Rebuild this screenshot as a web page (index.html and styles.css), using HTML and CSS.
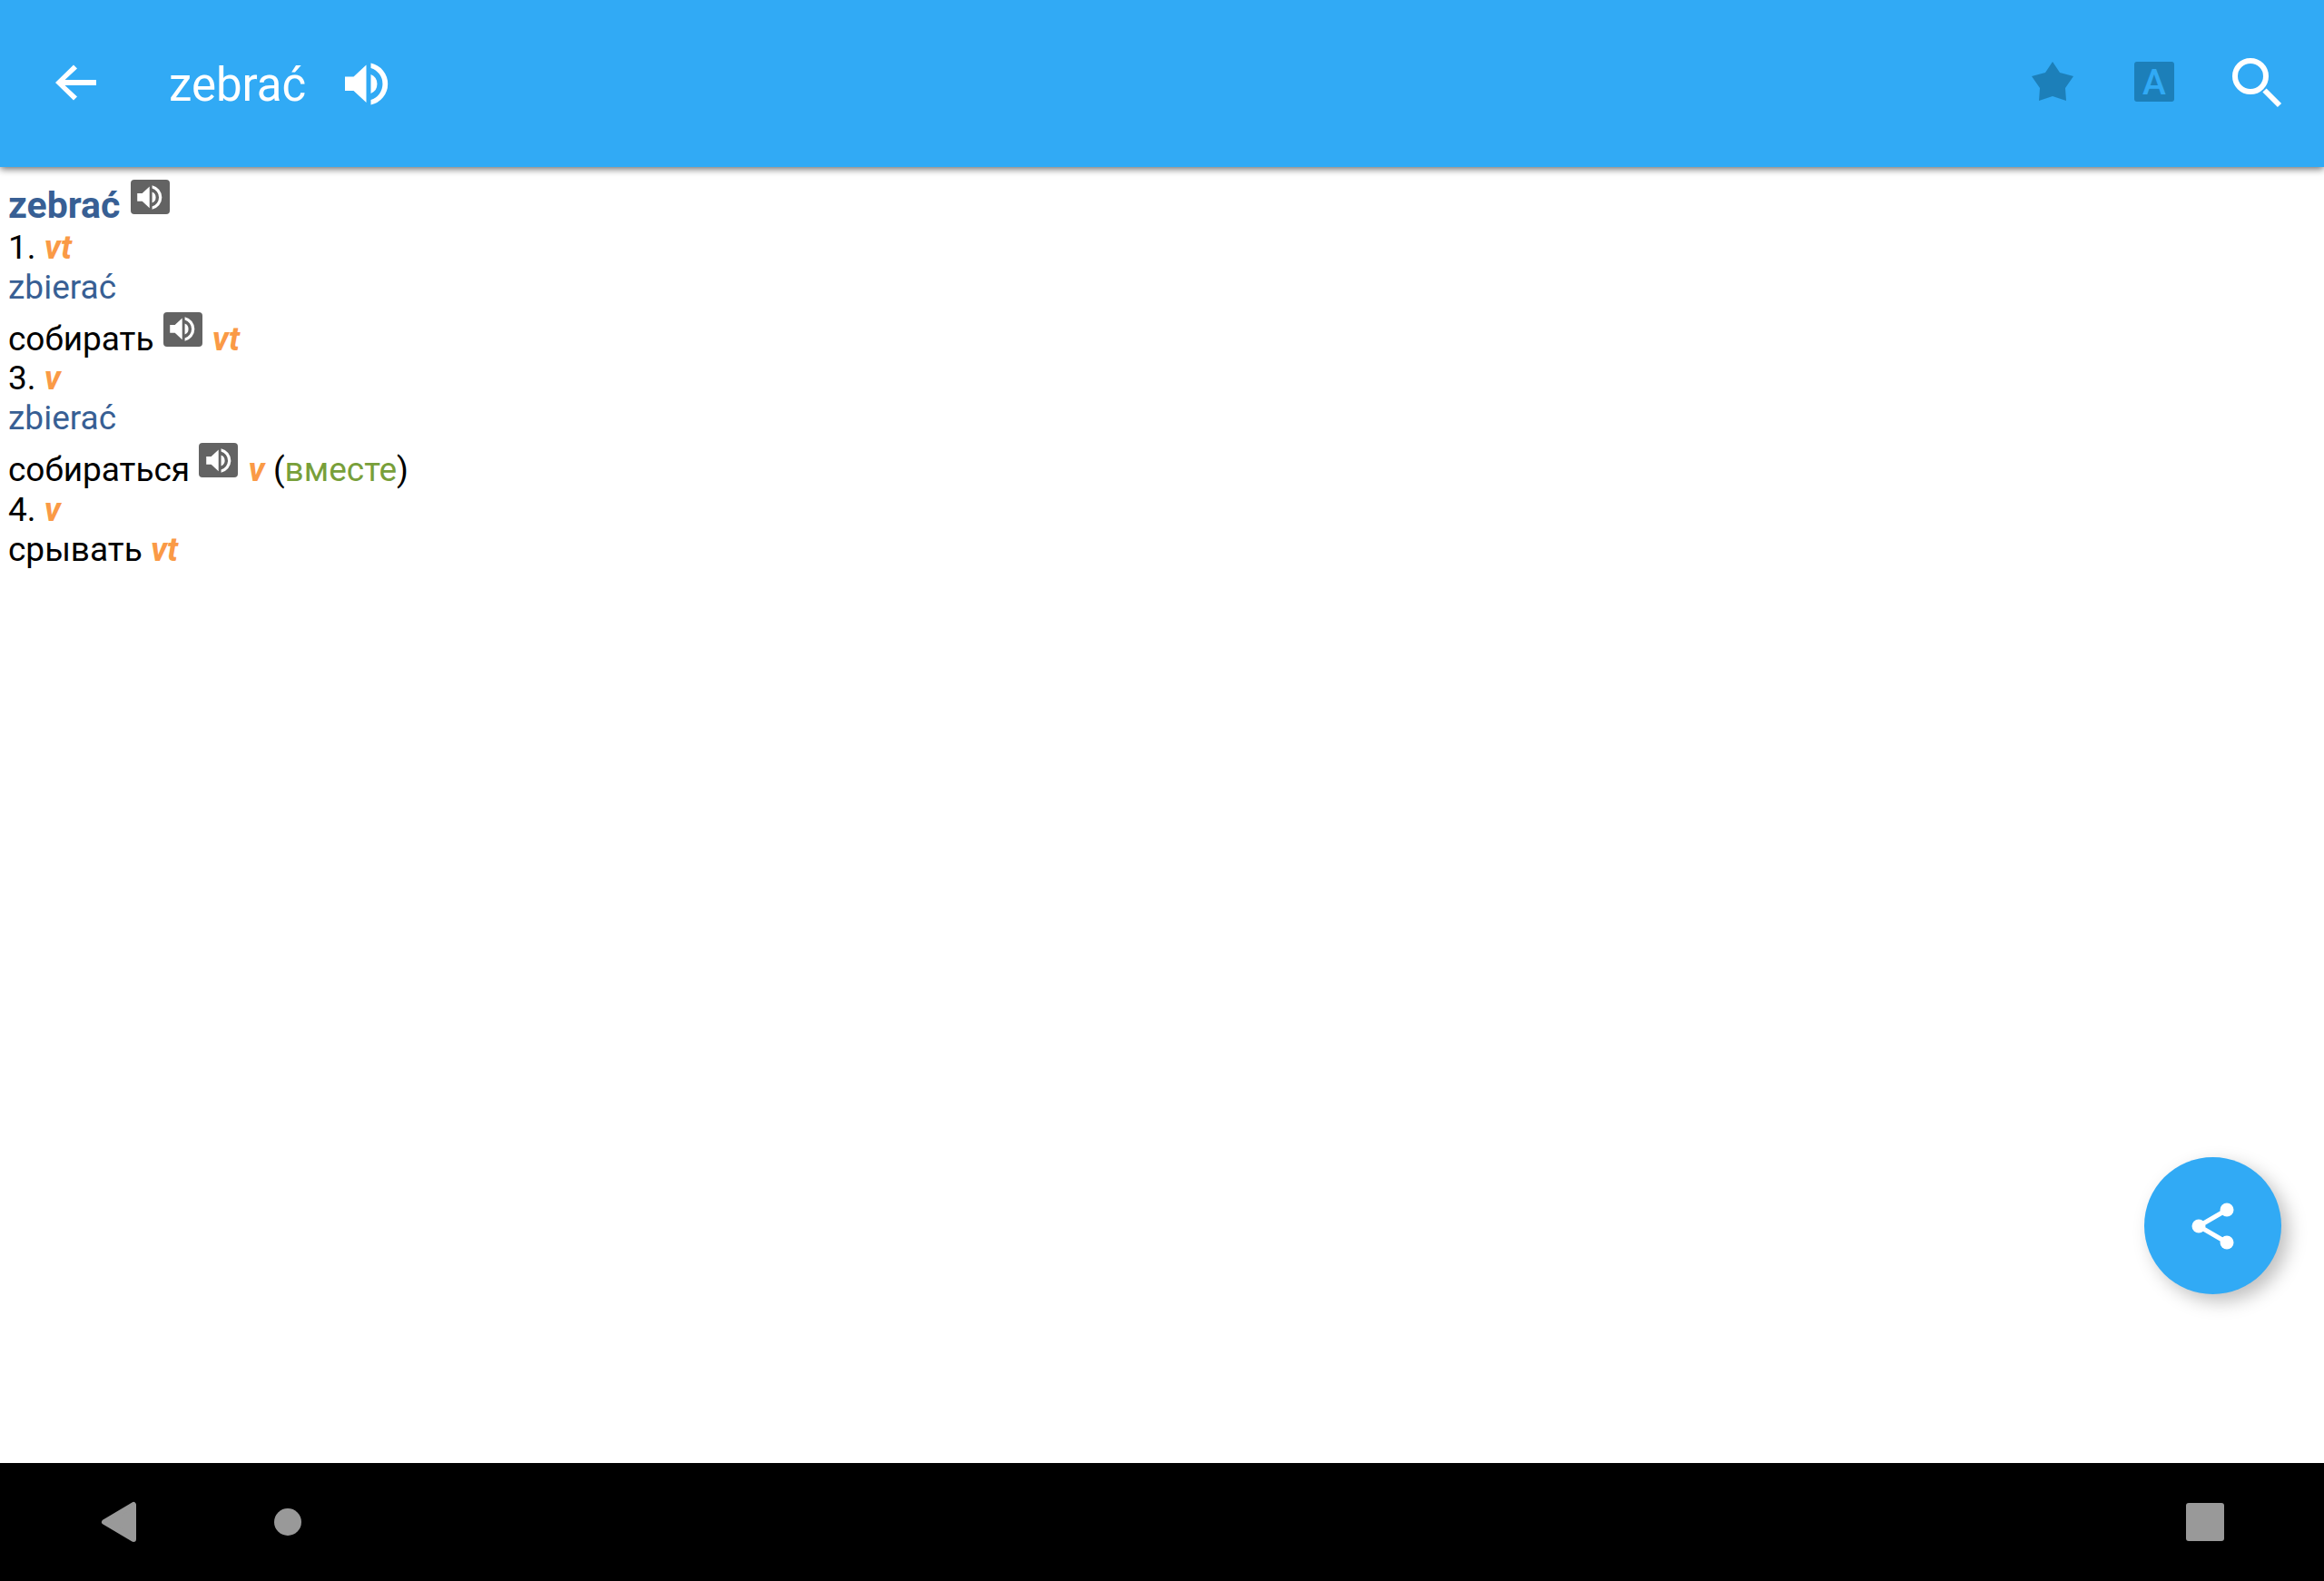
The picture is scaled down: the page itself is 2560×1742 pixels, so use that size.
FILE: index.html
```html
<!DOCTYPE html>
<html lang="pl">

<head>
    <meta charset="UTF-8">
    <meta name="viewport" content="width=device-width, initial-scale=1.0">
    <title>zebrać</title>
    <link rel="stylesheet" href="styles.css">
</head>

<body>
    <!-- speaker shape shared by all sound buttons -->
    <svg class="defs" aria-hidden="true">
        <symbol id="speaker" viewBox="8 8 48 47">
            <path d="M8 23.5H17.5L31.5 10.5V52L17.5 39H8Z" />
            <path d="M36.5 21A11.4 11.4 0 0 1 36.5 42Z" />
            <path d="M36.5 8.5A23.5 23.5 0 0 1 36.5 54.5V49A18.3 18.3 0 0 0 36.5 14Z" />
        </symbol>
    </svg>

    <header class="toolbar">
        <button type="button" class="back" aria-label="Back">
            <svg class="icon" viewBox="0 0 64 64">
                <path d="M9 31L29 11.5L33 15.5L19.5 28H54V34H19.5L33 46.5L29 50.5Z" />
            </svg>
        </button>
        <h1 class="title">zebrać</h1>
        <button type="button" class="speak" aria-label="Listen">
            <svg class="speak-icon"><use href="#speaker" /></svg>
        </button>
        <div class="actions">
            <button type="button" class="action muted" aria-label="Favorite">
                <svg class="icon" viewBox="0 0 64 64">
                    <path d="M32 8L40 20L55 24L46 37L47 51L32 46L17 51L18 37L9 24L24 20Z" />
                </svg>
            </button>
            <button type="button" class="action muted" aria-label="Font">
                <svg class="icon" viewBox="0 0 64 64">
                    <rect x="10" y="8" width="44" height="44" rx="3" />
                    <text class="letter" x="32" y="44" text-anchor="middle">A</text>
                </svg>
            </button>
            <button type="button" class="action" aria-label="Search">
                <svg class="icon line" viewBox="0 0 64 64">
                    <circle cx="26" cy="24" r="17" />
                    <path d="M41.5 39.5L58 56" />
                </svg>
            </button>
        </div>
    </header>

    <main class="article">
        <h2 class="word">zebrać <button type="button" class="sound" aria-label="Listen"><svg class="sound-icon"><use href="#speaker" /></svg></button></h2>
        <div>1. <em>vt</em></div>
        <div><a href="#">zbierać</a></div>
        <div lang="ru">собирать <button type="button" class="sound" aria-label="Listen"><svg class="sound-icon"><use href="#speaker" /></svg></button> <em>vt</em></div>
        <div>3. <em>v</em></div>
        <div><a href="#">zbierać</a></div>
        <div lang="ru">собираться <button type="button" class="sound" aria-label="Listen"><svg class="sound-icon"><use href="#speaker" /></svg></button> <em>v</em> (<span class="note">вместе</span>)</div>
        <div>4. <em>v</em></div>
        <div lang="ru">срывать <em>vt</em></div>

        <button type="button" class="share" aria-label="Share">
            <svg class="share-icon" viewBox="0 0 64 64">
                <path d="M47 14L16 32L47 50" />
                <circle cx="47" cy="14" r="7.5" />
                <circle cx="16" cy="32" r="7.5" />
                <circle cx="47" cy="50" r="7.5" />
            </svg>
        </button>
    </main>

    <nav class="navbar">
        <button type="button" class="nav-button" aria-label="Back">
            <svg class="icon" viewBox="0 0 64 64">
                <path d="M16 32L48 13V51Z" stroke="#999" stroke-width="6" stroke-linejoin="round" />
            </svg>
        </button>
        <button type="button" class="nav-button" aria-label="Home">
            <svg class="icon" viewBox="0 0 64 64">
                <circle cx="32" cy="32" r="15" />
            </svg>
        </button>
        <button type="button" class="nav-button recent" aria-label="Recent apps">
            <svg class="icon" viewBox="0 0 64 64">
                <rect x="11" y="11" width="42" height="42" rx="3" />
            </svg>
        </button>
    </nav>
</body>

</html>
```
FILE: styles.css
```css
* {
    box-sizing: border-box;
}

body {
    display: flex;
    flex-direction: column;
    min-height: 100vh;
    margin: 0;
    font-family: Roboto, "Noto Sans", sans-serif;
    background-color: #fff;
    color: #000;
}

button {
    display: flex;
    align-items: center;
    justify-content: center;
    padding: 0;
    border: none;
    background: none;
    color: #fff;
    cursor: pointer;
}

svg {
    display: block;
    fill: currentColor;
}

.defs {
    position: absolute;
    width: 0;
    height: 0;
}

.icon {
    width: 64px;
    height: 64px;
}

/* top bar */
.toolbar {
    display: flex;
    align-items: center;
    height: 184px;
    padding-right: 19px;
    background-color: #31aaf5;
    color: #fff;
    box-shadow: 0 2px 8px rgba(0, 0, 0, 0.6);
}

.back {
    width: 168px;
    height: 112px;
}

.title {
    margin: 0;
    padding: 3px 0 0 18px;
    font-size: 51px;
    font-weight: 400;
}

.speak {
    margin-left: 43px;
}

.speak-icon {
    width: 48px;
    height: 47px;
}

.actions {
    display: flex;
    margin-left: auto;
}

.action {
    width: 112px;
    height: 112px;
}

.muted {
    color: #1c7fb9;
}

.letter {
    font-family: Roboto, sans-serif;
    font-size: 39px;
    font-weight: 500;
    fill: #31aaf5;
}

.line {
    fill: none;
    stroke: currentColor;
    stroke-width: 6;
}

/* dictionary entry */
.article {
    position: relative;
    flex: 1;
    padding: 9px;
    font-size: 37px;
    line-height: 44px;
}

.word {
    margin: 0;
    font-size: 41px;
    line-height: 50px;
    color: #385f94;
}

.article a {
    color: #385f94;
    text-decoration: none;
}

.article em {
    font-weight: 700;
    color: #fa9a46;
}

.note {
    color: #789f3a;
}

.sound {
    display: inline-flex;
    width: 43px;
    height: 38px;
    margin: 5px 2px 0 1px;
    border-radius: 4px;
    background-color: #636363;
    vertical-align: 9px;
}

.sound-icon {
    width: 28px;
    height: 27px;
}

.share {
    position: absolute;
    right: 47px;
    bottom: 186px;
    width: 151px;
    height: 151px;
    border-radius: 50%;
    background-color: #31aaf5;
    box-shadow: 8px 8px 20px rgba(0, 0, 0, 0.25);
}

.share-icon {
    width: 64px;
    height: 64px;
}

.share-icon path {
    fill: none;
    stroke: #fff;
    stroke-width: 5;
}

/* system navigation */
.navbar {
    display: flex;
    align-items: center;
    height: 130px;
    padding: 0 38px;
    background-color: #000;
}

.nav-button {
    width: 186px;
    height: 130px;
    color: #999;
}

.recent {
    margin-left: auto;
}
```
